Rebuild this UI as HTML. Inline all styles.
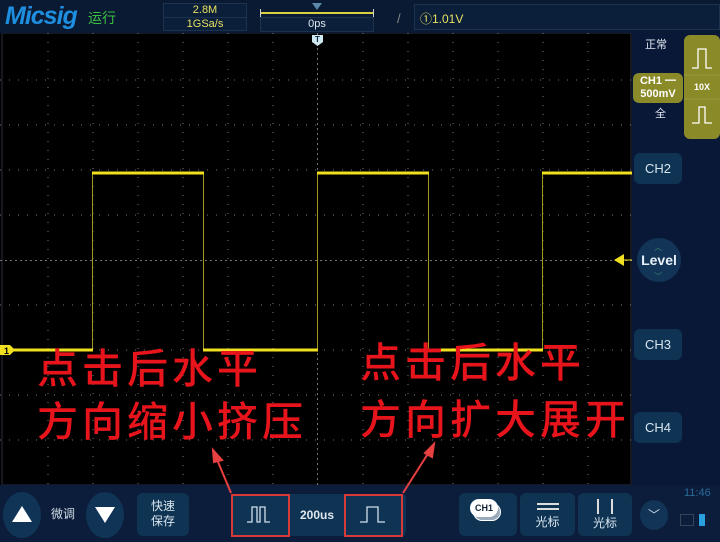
<!DOCTYPE html>
<html><head><meta charset="utf-8"><style>
*{margin:0;padding:0;box-sizing:border-box}
body{width:720px;height:542px;overflow:hidden;background:#081530;font-family:"Liberation Sans","Noto Sans CJK SC",sans-serif;position:relative}
.a{position:absolute}
.btn{position:absolute;background:#0f3352;border-radius:6px;color:#d8e6f0;text-align:center}
.red{position:absolute;color:#e8141c;font-family:"Noto Sans CJK SC",sans-serif;font-weight:500;font-size:41px;letter-spacing:4px;line-height:1}
</style></head><body>
<div class="a" style="left:0;top:0;width:720px;height:33px;background:#0a1a33"></div>
<div class="a" style="left:5px;top:2px;font:italic bold 25px 'Liberation Sans',sans-serif;color:#1e8fe0;letter-spacing:-1px">Micsig</div>
<div class="a" style="left:88px;top:8px;font-size:14px;color:#3cc040">运行</div>
<div class="a" style="left:163px;top:3px;width:84px;height:28px;border:1px solid #1c3350;background:#0b1f3a"></div>
<div class="a" style="left:163px;top:17px;width:84px;height:1px;background:#1c3350"></div>
<div class="a" style="left:163px;top:4px;width:84px;text-align:center;font-size:11px;color:#e8e060">2.8M</div>
<div class="a" style="left:163px;top:18px;width:84px;text-align:center;font-size:11px;color:#e8e060">1GSa/s</div>
<div class="a" style="left:260px;top:12px;width:114px;height:2px;background:#d8d040"></div>
<div class="a" style="left:260px;top:9px;width:1px;height:8px;background:#ccc"></div>
<div class="a" style="left:373px;top:9px;width:1px;height:8px;background:#ccc"></div>
<div class="a" style="left:312px;top:3px;width:0;height:0;border-left:5px solid transparent;border-right:5px solid transparent;border-top:7px solid #5a8aa8"></div>
<div class="a" style="left:260px;top:17px;width:114px;height:15px;background:#0b1f3a;border:1px solid #1c3350"></div>
<div class="a" style="left:260px;top:18px;width:114px;text-align:center;font-size:11px;color:#e0e8f0">0ps</div>
<div class="a" style="left:397px;top:11px;font-size:13px;color:#888">/</div>
<div class="a" style="left:414px;top:4px;width:306px;height:26px;border:1px solid #1c3350;background:#0b1f3a"></div>
<div class="a" style="left:420px;top:10px;font-size:12px;color:#e8e060">①1.01V</div>
<svg class="a" style="left:0;top:33px" width="632" height="452">
<rect x="0" y="0" width="632" height="452" fill="#000"/>
<rect x="2" y="0" width="629" height="452" fill="none" stroke="#2a3040"/>
<g stroke="#777" stroke-width="1" stroke-dasharray="1 8">
<line x1="48" y1="0" x2="48" y2="452"/><line x1="93" y1="0" x2="93" y2="452"/><line x1="138" y1="0" x2="138" y2="452"/><line x1="183" y1="0" x2="183" y2="452"/><line x1="228" y1="0" x2="228" y2="452"/><line x1="273" y1="0" x2="273" y2="452"/><line x1="363" y1="0" x2="363" y2="452"/><line x1="408" y1="0" x2="408" y2="452"/><line x1="453" y1="0" x2="453" y2="452"/><line x1="498" y1="0" x2="498" y2="452"/><line x1="543" y1="0" x2="543" y2="452"/><line x1="588" y1="0" x2="588" y2="452"/>
<line x1="0" y1="47" x2="632" y2="47"/><line x1="0" y1="92" x2="632" y2="92"/><line x1="0" y1="137" x2="632" y2="137"/><line x1="0" y1="182" x2="632" y2="182"/><line x1="0" y1="272" x2="632" y2="272"/><line x1="0" y1="317" x2="632" y2="317"/><line x1="0" y1="362" x2="632" y2="362"/><line x1="0" y1="407" x2="632" y2="407"/>
</g>
<g stroke="#777" stroke-dasharray="2 3"><line x1="317.5" y1="0" x2="317.5" y2="452"/><line x1="0" y1="227.5" x2="632" y2="227.5"/></g>
<g stroke="#a09820" stroke-width="1"><line x1="92.5" y1="140" x2="92.5" y2="317"/><line x1="203.5" y1="140" x2="203.5" y2="317"/><line x1="317.5" y1="140" x2="317.5" y2="317"/><line x1="428.5" y1="140" x2="428.5" y2="317"/><line x1="542.5" y1="140" x2="542.5" y2="317"/></g>
<g stroke="#f0e020" stroke-width="3"><line x1="0" y1="317" x2="93" y2="317"/><line x1="92" y1="140" x2="204" y2="140"/><line x1="203" y1="317" x2="318" y2="317"/><line x1="317" y1="140" x2="429" y2="140"/><line x1="428" y1="317" x2="543" y2="317"/><line x1="542" y1="140" x2="632" y2="140"/></g>
<path d="M312 2h11v7l-5.5 4-5.5-4z" fill="#cfe8f0"/>
<text x="317.5" y="9" font-size="8" font-weight="bold" text-anchor="middle" fill="#0a2a40" font-family="Liberation Sans">T</text>
<path d="M0 312h10l5 5-5 5h-10z" fill="#f0e020"/>
<text x="4" y="321" font-size="9" font-weight="bold" fill="#000" font-family="Liberation Sans">1</text>
<path d="M614 227l10-6v12z" fill="#f0e020"/>
<line x1="622" y1="227" x2="632" y2="227" stroke="#f0e020"/>
</svg>
<div class="red" style="left:37px;top:345px">点击后水平</div>
<div class="red" style="left:37px;top:398px">方向缩小挤压</div>
<div class="red" style="left:360px;top:339px">点击后水平</div>
<div class="red" style="left:360px;top:396px">方向扩大展开</div>
<div class="a" style="left:632px;top:33px;width:88px;height:452px;background:#0a1838"></div>
<div class="a" style="left:645px;top:36px;font-size:11px;color:#e0e8f0">正常</div>
<div class="a" style="left:684px;top:35px;width:36px;height:104px;background:#8a8a28;border-radius:6px"></div>
<svg class="a" style="left:684px;top:35px" width="36" height="104"><path d="M8 33h6V14h8v19h6" fill="none" stroke="#fff" stroke-width="1.3"/><path d="M8 88h7V72h6v16h7" fill="none" stroke="#fff" stroke-width="1.3"/><line x1="0" y1="40" x2="36" y2="40" stroke="#9a9a40"/><line x1="0" y1="64" x2="36" y2="64" stroke="#9a9a40"/></svg>
<div class="a" style="left:684px;top:82px;width:36px;text-align:center;font-size:9px;font-weight:bold;color:#fff">10X</div>
<div class="a" style="left:633px;top:73px;width:50px;height:30px;background:#8a8a28;border-radius:6px;color:#fff;font-size:11px;font-weight:bold;text-align:center;line-height:13px;padding-top:2px">CH1 ━<br>500mV</div>
<div class="a" style="left:655px;top:105px;font-size:11px;color:#e0e8f0">全</div>
<div class="btn" style="left:634px;top:153px;width:48px;height:31px;line-height:31px;font-size:13px">CH2</div>
<div class="a" style="left:637px;top:238px;width:44px;height:44px;border-radius:50%;background:#123456"></div>
<div class="a" style="left:637px;top:252px;width:44px;text-align:center;font-size:14px;font-weight:bold;color:#e8f0f8">Level</div>
<div class="a" style="left:654px;top:242px;font-size:8px;color:#3a8a70">︿</div>
<div class="a" style="left:654px;top:271px;font-size:8px;color:#3a8a70">﹀</div>
<div class="btn" style="left:634px;top:329px;width:48px;height:31px;line-height:31px;font-size:13px">CH3</div>
<div class="btn" style="left:634px;top:412px;width:48px;height:31px;line-height:31px;font-size:13px">CH4</div>
<div class="a" style="left:0;top:485px;width:720px;height:57px;background:#0b1d3a"></div>
<div class="a" style="left:3px;top:492px;width:38px;height:46px;border-radius:50%;background:#103456"></div>
<div class="a" style="left:12px;top:506px;border-left:10px solid transparent;border-right:10px solid transparent;border-bottom:16px solid #fff"></div>
<div class="a" style="left:51px;top:505px;font-size:12px;color:#d0dce8">微调</div>
<div class="a" style="left:86px;top:492px;width:38px;height:46px;border-radius:50%;background:#103456"></div>
<div class="a" style="left:95px;top:507px;border-left:10px solid transparent;border-right:10px solid transparent;border-top:16px solid #fff"></div>
<div class="btn" style="left:137px;top:493px;width:52px;height:43px;font-size:12px;line-height:15px;padding-top:6px">快速<br>保存</div>
<div class="a" style="left:232px;top:494px;width:174px;height:42px;background:#0f3352;border-radius:4px"></div>
<div class="a" style="left:231px;top:494px;width:59px;height:43px;border:2px solid #d83a3a"></div>
<div class="a" style="left:344px;top:494px;width:59px;height:43px;border:2px solid #d83a3a"></div>
<svg class="a" style="left:231px;top:494px" width="175" height="43"><path d="M16 28h5V13h5v15h3V13h5v15h5" fill="none" stroke="#cfe0ec" stroke-width="1.3"/><path d="M129 28h7V13h11v15h7" fill="none" stroke="#cfe0ec" stroke-width="1.3"/></svg>
<div class="a" style="left:292px;top:508px;width:50px;text-align:center;font-size:12px;font-weight:bold;color:#e0e8f0">200us</div>
<svg class="a" style="left:0;top:0" width="720" height="542"><g stroke="#e84040" stroke-width="2" fill="#e84040"><line x1="231" y1="493" x2="216" y2="457"/><path d="M213 450l9 10-8 2z"/><line x1="403" y1="493" x2="429" y2="452"/><path d="M434 444l-2 13-7-4z"/></g></svg>
<div class="btn" style="left:459px;top:493px;width:58px;height:43px"></div>
<div class="a" style="left:473px;top:503px;width:28px;height:18px;border-radius:9px;background:#9ab;border:1px solid #fff"></div>
<div class="a" style="left:470px;top:499px;width:28px;height:18px;border-radius:9px;background:#fff;color:#123;font-size:9px;font-weight:bold;text-align:center;line-height:18px">CH1</div>
<div class="btn" style="left:520px;top:493px;width:55px;height:43px;font-size:12px"><div style="margin:10px auto 0;width:22px;border-top:2px solid #ddd;height:7px;border-bottom:2px solid #ddd"></div><div style="margin-top:3px">光标</div></div>
<div class="btn" style="left:578px;top:493px;width:54px;height:43px;font-size:12px"><div style="margin:6px auto 0;width:16px;border-left:2px solid #ddd;border-right:2px solid #ddd;height:15px"></div><div>光标</div></div>
<div class="a" style="left:640px;top:500px;width:28px;height:30px;border-radius:50%;background:#123456;color:#cde;text-align:center;font-size:12px;line-height:30px">﹀</div>
<div class="a" style="left:684px;top:487px;font-size:11px;color:#2a6a9a">11:46</div>
<div class="a" style="left:680px;top:514px;width:14px;height:12px;border:1px solid #345"></div>
<div class="a" style="left:699px;top:514px;width:6px;height:12px;background:#28a0e0"></div>
</body></html>
